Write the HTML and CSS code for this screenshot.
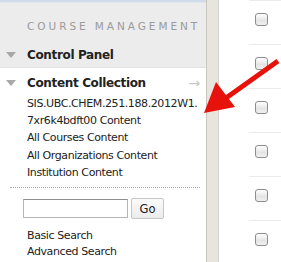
FILE: index.html
```html
<!DOCTYPE html>
<html>
<head>
<meta charset="utf-8">
<link rel="stylesheet" href="styles.css">
</head>
<body>
<div class="page">
  <aside class="sidebar">
    <div class="top-strip"></div>
    <div class="cm-header">
      <div class="cm-label">COURSE MANAGEMENT</div>
      <div class="section-title cp-title"><span class="tri"></span>Control Panel</div>
    </div>
    <div class="cc">
      <div class="section-title cc-title"><span class="tri"></span>Content Collection<span class="go-arrow">&#8594;</span></div>
      <ul class="links">
        <li>SIS.UBC.CHEM.251.188.2012W1.</li>
        <li>7xr6k4bdft00 Content</li>
        <li>All Courses Content</li>
        <li>All Organizations Content</li>
        <li>Institution Content</li>
      </ul>
      <div class="dots"></div>
      <div class="search">
        <input class="search-input" type="text">
        <button class="go-btn">Go</button>
      </div>
      <ul class="links search-links">
        <li>Basic Search</li>
        <li>Advanced Search</li>
      </ul>
    </div>
  </aside>
  <div class="splitter"></div>
  <main class="main">
    <div class="row"><span class="cb"></span></div>
    <div class="row"><span class="cb"></span></div>
    <div class="row"><span class="cb"></span></div>
    <div class="row"><span class="cb"></span></div>
    <div class="row"><span class="cb"></span></div>
    <div class="row"><span class="cb"></span></div>
  </main>
  <svg class="annot" width="281" height="262" viewBox="0 0 281 262">
    <line x1="278" y1="61" x2="226" y2="98" stroke="#e8120c" stroke-width="5" stroke-linecap="butt"/>
    <polygon points="204,113 216,82 235,107" fill="#e8120c"/>
  </svg>
</div>
</body>
</html>
```
FILE: styles.css
```css
html, body {
  margin: 0;
  padding: 0;
  background: #fff;
}
.page {
  position: relative;
  display: flex;
  width: 281px;
  height: 262px;
  overflow: hidden;
  font-family: "DejaVu Sans", sans-serif;
  color: #222;
}
.sidebar {
  width: 206px;
  flex: none;
  background: #fff;
  display: flex;
  flex-direction: column;
}
.top-strip {
  height: 2px;
  background: #cfdbe9;
  border-bottom: 1px solid #dfe5ec;
}
.cm-header {
  background: #ececec;
  height: 65px;
  border-bottom: 1px solid #e2e2e2;
  box-sizing: border-box;
}
.cm-label {
  padding: 17px 0 0 27px;
  font-size: 10.5px;
  letter-spacing: 2.95px;
  color: #9a9a9a;
  line-height: 12px;
}
.section-title {
  display: flex;
  align-items: center;
  font-weight: bold;
  font-size: 12px;
  letter-spacing: -0.35px;
  color: #222;
  line-height: 16px;
}
.cp-title {
  margin-top: 15px;
}
.tri {
  display: inline-block;
  width: 0;
  height: 0;
  border-left: 5px solid transparent;
  border-right: 5px solid transparent;
  border-top: 6px solid #a8a8a8;
  margin: 0 11px 0 6px;
}
.cc-title {
  margin-top: 7px;
}
.go-arrow {
  margin-left: auto;
  margin-right: 6px;
  font-weight: normal;
  color: #c8c8c8;
  font-size: 14px;
}
.links {
  list-style: none;
  margin: 4px 0 0 0;
  padding: 0 0 0 27px;
  font-size: 11px;
  letter-spacing: -0.4px;
  line-height: 17.2px;
  color: #222;
}
.links li {
  white-space: nowrap;
}
.dots {
  margin: 6px 6px 0 10px;
  border-top: 1px dotted #a9a9a9;
}
.search {
  display: flex;
  align-items: center;
  margin: 10px 0 0 23px;
  gap: 3px;
}
.search-input {
  width: 105px;
  height: 19px;
  box-sizing: border-box;
  border: 1px solid #b5b5b5;
  border-top-color: #8f8f8f;
  padding: 0;
  margin: 0;
  background: #fff;
}
.go-btn {
  width: 33px;
  height: 21px;
  box-sizing: border-box;
  border: 1px solid #c6c6c6;
  border-radius: 2px;
  background: linear-gradient(#fafafa, #ececec);
  font-family: "DejaVu Sans", sans-serif;
  font-size: 11.5px;
  color: #222;
  padding: 0;
  margin: 0;
}
.search-links {
  margin-top: 9px;
  line-height: 16px;
}
.splitter {
  width: 11px;
  flex: none;
  background: #e8e5de;
  border-left: 1px solid #c9c6bf;
  border-right: 1px solid #d6d3cc;
}
.main {
  flex: 1;
  display: flex;
  flex-direction: column;
}
.row {
  height: 44px;
  flex: none;
  border-top: 1px solid #ebebeb;
  margin-left: 30px;
  box-sizing: border-box;
  position: relative;
}
.cb {
  position: absolute;
  left: 6px;
  top: 12px;
  width: 13px;
  height: 13px;
  box-sizing: border-box;
  border: 1px solid #8e8e8e;
  border-radius: 3px;
  background: linear-gradient(#ffffff, #e4e4e4 60%, #f0f0f0);
}
.annot {
  position: absolute;
  left: 0;
  top: 0;
  pointer-events: none;
}
```
